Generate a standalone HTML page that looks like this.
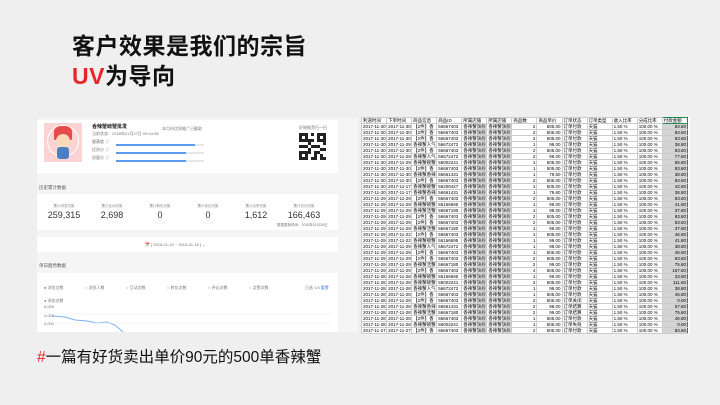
<!DOCTYPE html>
<html><head><meta charset="utf-8"><style>
*{margin:0;padding:0;box-sizing:border-box}
body{width:720px;height:405px;background:#efefef;position:relative;overflow:hidden;font-family:"Liberation Sans","Noto Sans CJK SC",sans-serif}
.t{position:absolute;left:72px;font-size:23px;font-weight:bold;color:#111;letter-spacing:0.5px;line-height:26px}
.red{color:#e8262a}
.ls{position:absolute;left:37px;top:118px;width:321px;height:214px;background:#f5f5f5;overflow:hidden}
.card{position:absolute;background:#fff;left:0;width:301px}
.tiny{font-size:4px;color:#777;position:absolute;white-space:nowrap}
.bar{position:absolute;height:2px;background:#e6e6e6;left:79px;width:88px}
.bar i{display:block;height:2px;background:#5b9bf0}
.num{position:absolute;font-size:9px;color:#333;top:16px;width:50px;text-align:center}
.lab{position:absolute;font-size:3.5px;color:#888;top:10px;width:50px;text-align:center}
.sh{position:absolute;left:361px;top:117px;width:329px;height:217px;background:#fff;overflow:hidden}
table{border-collapse:collapse;table-layout:fixed;width:327px}
td{height:6px;font-size:4.5px;line-height:5px;border:1px solid #ccc;color:#000;white-space:nowrap;overflow:hidden;padding:0 1px;width:25px}
td.r{text-align:right}
td.g{background:#d4d4d4;text-align:right;border-left:1.5px solid #1e8a4c;border-right:1.5px solid #1e8a4c}
.bt{position:absolute;left:37px;top:345px;font-size:15.5px;color:#111}
</style></head><body>
<div class="t" style="top:33px">客户效果是我们的宗旨</div>
<div class="t" style="top:63px"><span class="red">UV</span>为导向</div>

<div class="ls">
 <div class="card" style="top:2px;height:53px">
  <div style="position:absolute;left:7px;top:3px;width:38px;height:39px;background:#fbd3d3"></div>
  <div style="position:absolute;left:10px;top:5px;width:32px;height:32px;border:1px solid #fff;border-radius:50%"></div>
  <div style="position:absolute;left:17px;top:6px;width:18px;height:14px;background:#e54b4b;border-radius:40% 40% 10% 10%"></div>
  <div style="position:absolute;left:19px;top:14px;width:14px;height:14px;background:#f9d9b8;border-radius:50%"></div>
  <div style="position:absolute;left:20px;top:27px;width:12px;height:12px;background:#4b7fc4;border-radius:3px"></div>
  <div style="position:absolute;left:55px;top:3px;font-size:5px;font-weight:bold;color:#222">香辣蟹螃蟹批发</div>
  <div class="tiny" style="left:55px;top:11px">当前状态：2018年01月27日 09:54:38</div>
  <div class="tiny" style="left:125px;top:6px">本月份优质推广已截取</div>
  <div class="tiny" style="left:55px;top:19px">健康度 ⓘ</div>
  <div class="tiny" style="left:55px;top:27px">优质分 ⓘ</div>
  <div class="tiny" style="left:55px;top:35px">质量分 ⓘ</div>
  <div class="bar" style="top:24px"><i style="width:90%"></i></div>
  <div class="bar" style="top:32px"><i style="width:80%"></i></div>
  <div class="bar" style="top:40px"><i style="width:80%"></i></div>
  <div class="tiny" style="left:262px;top:5px">好物推荐扫一扫</div>
  <svg style="position:absolute;left:262px;top:13px" width="27" height="27" viewBox="0 0 9 9">
   <rect width="9" height="9" fill="#fff"/>
   <path d="M0 0h3v3H0zM6 0h3v3H6zM0 6h3v3H0z" fill="#222"/>
   <path d="M1 1h1v1H1zM7 1h1v1H7zM1 7h1v1H1z" fill="#fff"/>
   <path d="M4 0h1v1H4zM3 2h2v1H3zM4 4h2v1H4zM3 5h1v2H3zM6 4h1v1H6zM7 5h2v1H7zM5 6h1v3H5zM7 7h1v2H7zM4 8h1v1H4zM0 4h2v1H0zM2 4h1v1H2zM8 3h1v1H8zM3 3h1v1H3zM6 6h1v1H6zM8 8h1v1H8z" fill="#222"/>
  </svg>
 </div>
 <div class="tiny" style="left:2px;top:67px;font-size:4.5px;color:#555">历史累计数据</div>
 <div class="card" style="top:76px;height:36px">
  <div class="lab" style="left:2px">累计浏览次数</div><div class="num" style="left:2px">259,315</div>
  <div class="lab" style="left:50px">累计互动次数</div><div class="num" style="left:50px">2,698</div>
  <div class="lab" style="left:98px">累计转化次数</div><div class="num" style="left:98px">0</div>
  <div class="lab" style="left:146px">累计评论次数</div><div class="num" style="left:146px">0</div>
  <div class="lab" style="left:194px">累计点赞次数</div><div class="num" style="left:194px">1,612</div>
  <div class="lab" style="left:242px">累计访问次数</div><div class="num" style="left:242px">166,463</div>
  <div class="tiny" style="left:240px;top:29px;font-size:3.5px">数据更新时间：2018年01月26日</div>
 </div>
 <div class="card" style="top:119px;height:15px"><div class="tiny" style="left:108px;top:5px">📅 [ 2018-01-19 ~ 2018-01-16 ] ⌄</div></div>
 <div class="tiny" style="left:2px;top:145px;font-size:4.5px;color:#555">单日趋势数据</div>
 <div class="card" style="top:155px;height:62px">
  <div class="tiny" style="left:7px;top:12px"><span style="color:#3a7ff0">●</span> 浏览次数</div>
  <div class="tiny" style="left:48px;top:12px">○ 浏览人数</div>
  <div class="tiny" style="left:89px;top:12px">○ 互动次数</div>
  <div class="tiny" style="left:130px;top:12px">○ 转化次数</div>
  <div class="tiny" style="left:171px;top:12px">○ 评论次数</div>
  <div class="tiny" style="left:212px;top:12px">○ 点赞次数</div>
  <div class="tiny" style="left:268px;top:12px">已选 1/4 <span style="color:#3a7ff0">重置</span></div>
  <div class="tiny" style="left:7px;top:25px"><span style="color:#3a7ff0">●</span> 浏览次数</div>
  <div class="tiny" style="left:7px;top:31px">5,000</div>
  <div class="tiny" style="left:7px;top:40px">4,000</div>
  <div class="tiny" style="left:7px;top:48px">3,000</div>
  <svg style="position:absolute;left:0;top:30px" width="301" height="32"><path d="M15 13 L28 14 L38 17 L50 18 L60 20 L70 19 L78 22 L86 29 L92 34" stroke="#7fb0f0" stroke-width="1" fill="none"/><path d="M15 11H295M15 20H295" stroke="#eee" stroke-width="0.5"/></svg>
 </div>
</div>

<div class="sh"><table>
<tr><td>利道时间</td><td>下单时间</td><td>商品信息</td><td>商品ID</td><td>所属店铺</td><td>所属店铺</td><td>商品数</td><td>商品单价</td><td>订单状态</td><td>订单类型</td><td>收入比率</td><td>分成比率</td><td style="border:1.5px solid #1e8a4c">付款金额</td></tr>
<tr><td>2017-11-30 2</td><td>2017-11-30 2</td><td>【2件】香</td><td>56667403</td><td>香辣蟹旗舰店</td><td>香辣蟹旗舰</td><td class="r">2</td><td class="r">505.00</td><td>订单付款</td><td>天猫</td><td>1.50 %</td><td>100.00 %</td><td class="g">83.60</td></tr>
<tr><td>2017-11-30 1</td><td>2017-11-30 1</td><td>【2件】香</td><td>56667403</td><td>香辣蟹旗舰店</td><td>香辣蟹旗舰</td><td class="r">2</td><td class="r">505.00</td><td>订单付款</td><td>天猫</td><td>1.50 %</td><td>100.00 %</td><td class="g">83.60</td></tr>
<tr><td>2017-11-30 1</td><td>2017-11-30 1</td><td>【2件】香</td><td>56667403</td><td>香辣蟹旗舰店</td><td>香辣蟹旗舰</td><td class="r">2</td><td class="r">505.00</td><td>订单付款</td><td>天猫</td><td>1.50 %</td><td>100.00 %</td><td class="g">83.60</td></tr>
<tr><td>2017-11-30 1</td><td>2017-11-29 2</td><td>香辣蟹人气</td><td>56672472</td><td>香辣蟹旗舰店</td><td>香辣蟹旗舰</td><td class="r">1</td><td class="r">98.00</td><td>订单付款</td><td>天猫</td><td>1.50 %</td><td>100.00 %</td><td class="g">38.80</td></tr>
<tr><td>2017-11-30 1</td><td>2017-11-30 1</td><td>【2件】香</td><td>56667403</td><td>香辣蟹旗舰店</td><td>香辣蟹旗舰</td><td class="r">2</td><td class="r">505.00</td><td>订单付款</td><td>天猫</td><td>1.50 %</td><td>100.00 %</td><td class="g">83.60</td></tr>
<tr><td>2017-11-30 0</td><td>2017-11-29 1</td><td>香辣蟹人气</td><td>56672472</td><td>香辣蟹旗舰店</td><td>香辣蟹旗舰</td><td class="r">2</td><td class="r">98.00</td><td>订单付款</td><td>天猫</td><td>1.50 %</td><td>100.00 %</td><td class="g">77.60</td></tr>
<tr><td>2017-11-30 0</td><td>2017-11-29 1</td><td>香辣蟹螃蟹</td><td>56002241</td><td>香辣蟹旗舰店</td><td>香辣蟹旗舰</td><td class="r">1</td><td class="r">505.00</td><td>订单付款</td><td>天猫</td><td>1.50 %</td><td>100.00 %</td><td class="g">55.80</td></tr>
<tr><td>2017-11-30 0</td><td>2017-11-30 0</td><td>【2件】香</td><td>56667403</td><td>香辣蟹旗舰店</td><td>香辣蟹旗舰</td><td class="r">1</td><td class="r">505.00</td><td>订单付款</td><td>天猫</td><td>1.50 %</td><td>100.00 %</td><td class="g">83.60</td></tr>
<tr><td>2017-11-30 0</td><td>2017-11-30 0</td><td>香辣蟹香辣</td><td>56661431</td><td>香辣蟹旗舰店</td><td>香辣蟹旗舰</td><td class="r">1</td><td class="r">79.60</td><td>订单付款</td><td>天猫</td><td>1.50 %</td><td>100.00 %</td><td class="g">38.80</td></tr>
<tr><td>2017-11-30 0</td><td>2017-11-30 0</td><td>【2件】香</td><td>56667403</td><td>香辣蟹旗舰店</td><td>香辣蟹旗舰</td><td class="r">2</td><td class="r">505.00</td><td>订单付款</td><td>天猫</td><td>1.50 %</td><td>100.00 %</td><td class="g">83.60</td></tr>
<tr><td>2017-11-30 0</td><td>2017-11-17 1</td><td>香辣蟹螃蟹</td><td>56200427</td><td>香辣蟹旗舰店</td><td>香辣蟹旗舰</td><td class="r">1</td><td class="r">505.00</td><td>订单付款</td><td>天猫</td><td>1.50 %</td><td>100.00 %</td><td class="g">42.80</td></tr>
<tr><td>2017-11-30 0</td><td>2017-11-17 1</td><td>香辣蟹香辣</td><td>56661431</td><td>香辣蟹旗舰店</td><td>香辣蟹旗舰</td><td class="r">1</td><td class="r">79.60</td><td>订单付款</td><td>天猫</td><td>1.50 %</td><td>100.00 %</td><td class="g">38.80</td></tr>
<tr><td>2017-11-29 2</td><td>2017-11-29 2</td><td>【2件】香</td><td>56667403</td><td>香辣蟹旗舰店</td><td>香辣蟹旗舰</td><td class="r">2</td><td class="r">505.00</td><td>订单付款</td><td>天猫</td><td>1.50 %</td><td>100.00 %</td><td class="g">83.60</td></tr>
<tr><td>2017-11-29 2</td><td>2017-11-29 2</td><td>香辣蟹螃蟹</td><td>56166695</td><td>香辣蟹旗舰店</td><td>香辣蟹旗舰</td><td class="r">1</td><td class="r">99.00</td><td>订单付款</td><td>天猫</td><td>1.50 %</td><td>100.00 %</td><td class="g">41.80</td></tr>
<tr><td>2017-11-29 2</td><td>2017-11-29 2</td><td>香辣蟹活蟹</td><td>56667180</td><td>香辣蟹旗舰店</td><td>香辣蟹旗舰</td><td class="r">1</td><td class="r">99.00</td><td>订单付款</td><td>天猫</td><td>1.50 %</td><td>100.00 %</td><td class="g">37.80</td></tr>
<tr><td>2017-11-29 2</td><td>2017-11-29 2</td><td>【2件】香</td><td>56667403</td><td>香辣蟹旗舰店</td><td>香辣蟹旗舰</td><td class="r">2</td><td class="r">505.00</td><td>订单付款</td><td>天猫</td><td>1.50 %</td><td>100.00 %</td><td class="g">83.60</td></tr>
<tr><td>2017-11-29 1</td><td>2017-11-29 1</td><td>【2件】香</td><td>56667403</td><td>香辣蟹旗舰店</td><td>香辣蟹旗舰</td><td class="r">2</td><td class="r">505.00</td><td>订单付款</td><td>天猫</td><td>1.50 %</td><td>100.00 %</td><td class="g">83.60</td></tr>
<tr><td>2017-11-29 1</td><td>2017-11-29 1</td><td>香辣蟹活蟹</td><td>56667180</td><td>香辣蟹旗舰店</td><td>香辣蟹旗舰</td><td class="r">1</td><td class="r">99.00</td><td>订单付款</td><td>天猫</td><td>1.50 %</td><td>100.00 %</td><td class="g">37.80</td></tr>
<tr><td>2017-11-29 1</td><td>2017-11-22 0</td><td>【2件】香</td><td>56667403</td><td>香辣蟹旗舰店</td><td>香辣蟹旗舰</td><td class="r">1</td><td class="r">505.00</td><td>订单付款</td><td>天猫</td><td>1.50 %</td><td>100.00 %</td><td class="g">46.80</td></tr>
<tr><td>2017-11-29 1</td><td>2017-11-22 0</td><td>香辣蟹螃蟹</td><td>56166695</td><td>香辣蟹旗舰店</td><td>香辣蟹旗舰</td><td class="r">1</td><td class="r">99.00</td><td>订单付款</td><td>天猫</td><td>1.50 %</td><td>100.00 %</td><td class="g">41.80</td></tr>
<tr><td>2017-11-29 1</td><td>2017-11-29 1</td><td>香辣蟹人气</td><td>56672472</td><td>香辣蟹旗舰店</td><td>香辣蟹旗舰</td><td class="r">1</td><td class="r">98.00</td><td>订单付款</td><td>天猫</td><td>1.50 %</td><td>100.00 %</td><td class="g">38.80</td></tr>
<tr><td>2017-11-29 1</td><td>2017-11-29 1</td><td>【2件】香</td><td>56667403</td><td>香辣蟹旗舰店</td><td>香辣蟹旗舰</td><td class="r">1</td><td class="r">505.00</td><td>订单付款</td><td>天猫</td><td>1.50 %</td><td>100.00 %</td><td class="g">46.80</td></tr>
<tr><td>2017-11-29 0</td><td>2017-11-29 0</td><td>【2件】香</td><td>56667403</td><td>香辣蟹旗舰店</td><td>香辣蟹旗舰</td><td class="r">2</td><td class="r">505.00</td><td>订单付款</td><td>天猫</td><td>1.50 %</td><td>100.00 %</td><td class="g">83.60</td></tr>
<tr><td>2017-11-29 0</td><td>2017-11-29 0</td><td>香辣蟹活蟹</td><td>56667180</td><td>香辣蟹旗舰店</td><td>香辣蟹旗舰</td><td class="r">2</td><td class="r">99.00</td><td>订单付款</td><td>天猫</td><td>1.50 %</td><td>100.00 %</td><td class="g">75.60</td></tr>
<tr><td>2017-11-29 0</td><td>2017-11-29 0</td><td>【2件】香</td><td>56667403</td><td>香辣蟹旗舰店</td><td>香辣蟹旗舰</td><td class="r">4</td><td class="r">505.00</td><td>订单付款</td><td>天猫</td><td>1.50 %</td><td>100.00 %</td><td class="g">167.60</td></tr>
<tr><td>2017-11-28 1</td><td>2017-11-28 1</td><td>香辣蟹螃蟹</td><td>56166695</td><td>香辣蟹旗舰店</td><td>香辣蟹旗舰</td><td class="r">1</td><td class="r">99.00</td><td>订单付款</td><td>天猫</td><td>1.50 %</td><td>100.00 %</td><td class="g">33.80</td></tr>
<tr><td>2017-11-28 1</td><td>2017-11-28 1</td><td>香辣蟹螃蟹</td><td>56002241</td><td>香辣蟹旗舰店</td><td>香辣蟹旗舰</td><td class="r">2</td><td class="r">505.00</td><td>订单付款</td><td>天猫</td><td>1.50 %</td><td>100.00 %</td><td class="g">111.60</td></tr>
<tr><td>2017-11-28 1</td><td>2017-11-28 1</td><td>香辣蟹人气</td><td>56672472</td><td>香辣蟹旗舰店</td><td>香辣蟹旗舰</td><td class="r">1</td><td class="r">98.00</td><td>订单付款</td><td>天猫</td><td>1.50 %</td><td>100.00 %</td><td class="g">38.80</td></tr>
<tr><td>2017-11-28 1</td><td>2017-11-28 1</td><td>【2件】香</td><td>56667403</td><td>香辣蟹旗舰店</td><td>香辣蟹旗舰</td><td class="r">1</td><td class="r">505.00</td><td>订单付款</td><td>天猫</td><td>1.50 %</td><td>100.00 %</td><td class="g">46.80</td></tr>
<tr><td>2017-11-28 1</td><td>2017-11-28 1</td><td>【2件】香</td><td>56667403</td><td>香辣蟹旗舰店</td><td>香辣蟹旗舰</td><td class="r">2</td><td class="r">505.00</td><td>订单关闭</td><td>天猫</td><td>1.50 %</td><td>100.00 %</td><td class="g">0.00</td></tr>
<tr><td>2017-11-28 1</td><td>2017-11-28 1</td><td>香辣蟹香辣</td><td>56661431</td><td>香辣蟹旗舰店</td><td>香辣蟹旗舰</td><td class="r">2</td><td class="r">98.00</td><td>订单结算</td><td>天猫</td><td>1.50 %</td><td>100.00 %</td><td class="g">57.60</td></tr>
<tr><td>2017-11-28 1</td><td>2017-11-28 1</td><td>香辣蟹活蟹</td><td>56667180</td><td>香辣蟹旗舰店</td><td>香辣蟹旗舰</td><td class="r">2</td><td class="r">99.00</td><td>订单结算</td><td>天猫</td><td>1.50 %</td><td>100.00 %</td><td class="g">75.60</td></tr>
<tr><td>2017-11-28 0</td><td>2017-11-28 0</td><td>【2件】香</td><td>56667403</td><td>香辣蟹旗舰店</td><td>香辣蟹旗舰</td><td class="r">1</td><td class="r">505.00</td><td>订单付款</td><td>天猫</td><td>1.50 %</td><td>100.00 %</td><td class="g">46.80</td></tr>
<tr><td>2017-11-28 0</td><td>2017-11-28 0</td><td>香辣蟹螃蟹</td><td>56002241</td><td>香辣蟹旗舰店</td><td>香辣蟹旗舰</td><td class="r">1</td><td class="r">505.00</td><td>订单失效</td><td>天猫</td><td>1.50 %</td><td>100.00 %</td><td class="g">0.00</td></tr>
<tr><td>2017-11-27 2</td><td>2017-11-27 2</td><td>【2件】香</td><td>56667403</td><td>香辣蟹旗舰店</td><td>香辣蟹旗舰</td><td class="r">2</td><td class="r">505.00</td><td>订单付款</td><td>天猫</td><td>1.50 %</td><td>100.00 %</td><td class="g">83.60</td></tr>
</table></div>

<div class="bt"><span class="red">#</span>一篇有好货卖出单价90元的500单香辣蟹</div>
</body></html>
